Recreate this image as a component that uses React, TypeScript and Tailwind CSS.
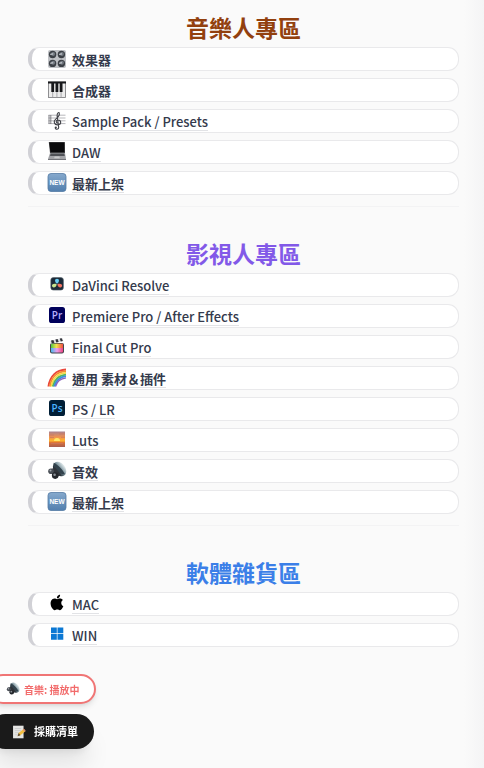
import React, { useState } from 'react';

interface LinkItem {
  label: string;
  icon: React.ReactNode;
}

interface Section {
  id: string;
  title: string;
  color: string;
  items: LinkItem[];
}

const iconClass = 'h-5 w-5 shrink-0';

const Knob = ({ x, y }: { x: number; y: number }) => (
  <g>
    <circle cx={x} cy={y} r="3.7" fill="#3c4046" />
    <circle cx={x + 0.5} cy={y - 0.6} r="2" fill="#747a82" />
    <path d={`M${x - 2.4} ${y - 0.2}L${x + 0.6} ${y - 0.6}`} stroke="#d9dde2" strokeWidth="1" />
  </g>
);

const KnobsIcon = () => (
  <svg viewBox="0 0 20 20" className={iconClass} aria-hidden="true">
    <rect x="1" y="1" width="18" height="18" rx="2" fill="#bfc1c5" />
    <Knob x={5.6} y={5.5} />
    <Knob x={14.4} y={5.5} />
    <Knob x={5.6} y={14.4} />
    <Knob x={14.4} y={14.4} />
  </svg>
);

const PianoIcon = () => (
  <svg viewBox="0 0 20 20" className={iconClass} aria-hidden="true">
    <rect x="1.5" y="2" width="17" height="15.5" fill="#ececec" stroke="#77777a" strokeWidth=".8" />
    <path d="M5.7 4v13M9.9 4v13M14.1 4v13" stroke="#8c8c90" strokeWidth=".7" />
    <path d="M1 1.500h18v2H1zM4.300 3.500h2.800v8.500H4.300zM8.500 3.500h2.800v8.500H8.500zM12.700 3.500h2.800v8.500h-2.800z" fill="#17181b" />
  </svg>
);

const ScoreIcon = () => (
  <svg viewBox="0 0 20 20" className={iconClass} fill="none" aria-hidden="true">
    <path d="M1.5 4.2h17M1.5 7h17M1.5 9.8h17M1.5 12.6h17" stroke="#a4a5a9" strokeWidth=".8" />
    <path d="M2 4v9M3.800 4v9" stroke="#64666c" strokeWidth=".8" />
    <path
      d="M10.600 12c-2-.4-1.800-3 .4-3 3.500 0 3.600 4.600.1 4.800C7.200 14.200 6 10.500 8.700 8.200c2-1.700 4.400-3.500 3.600-6-.4-1.500-2.200-.3-2.200 2.400l1.600 11.600c.2 2.500-3.400 2.500-3.400.8"
      stroke="#404248"
      strokeWidth="1.1"
      strokeLinecap="round"
    />
    <circle cx="8.800" cy="16.600" r="1.100" fill="#404248" />
  </svg>
);

const LaptopIcon = () => (
  <svg viewBox="0 0 20 20" className={iconClass} aria-hidden="true">
    <path d="M1.800 0h16l.2 11H3z" fill="#4b4b4e" />
    <path d="M2.300.4h15.200v9.900H3.400z" fill="#09090b" />
    <path d="M3 11h15l1 6H1z" fill="#a3a4a8" />
    <path d="M3.600 11.500h13.600l.6 2.500H3z" fill="#505257" />
    <path d="M7.600 14.600h4.800l.4 1.600H7.200z" fill="#c9cacc" />
    <path d="M1 17h18v1H1z" fill="#737479" />
  </svg>
);

const NewIcon = () => (
  <svg viewBox="0 0 20 20" className={iconClass} aria-hidden="true">
    <defs>
      <linearGradient id="newFill" x1="0" y1="0" x2="0" y2="1">
        <stop offset="0" stopColor="#86a9cd" />
        <stop offset="1" stopColor="#527fae" />
      </linearGradient>
    </defs>
    <rect x="1" y="0.500" width="18" height="18" rx="3" fill="url(#newFill)" stroke="#547ba5" strokeWidth=".8" />
    <text x="10" y="11.800" textAnchor="middle" fontSize="6.500" fontWeight="700" fill="#fff" fontFamily="Liberation Sans, sans-serif">NEW</text>
  </svg>
);

const ResolveIcon = () => (
  <svg viewBox="0 0 20 20" className={iconClass} aria-hidden="true">
    <rect x="3.800" y="2.500" width="12.600" height="12.600" rx="2.600" fill="#1c2a38" stroke="#56616b" strokeWidth=".6" />
    <path d="M10 8.700c-2.700-1.900-2.500-5 0-5s2.700 3.100 0 5z" fill="#6accf2" />
    <path d="M9.700 9.200c-.4 3.200-3.400 4.300-4.500 2.300s1.700-3.700 4.500-2.300z" fill="#c9e58f" />
    <path d="M10.400 9.200c2.800-1.400 5.600.3 4.500 2.300s-4.100.9-4.500-2.300z" fill="#f27362" />
  </svg>
);

const PremiereIcon = () => (
  <svg viewBox="0 0 20 20" className={iconClass} aria-hidden="true">
    <rect x="2" y="1" width="16" height="16" rx="2.600" fill="#00005b" />
    <text x="10" y="12.500" textAnchor="middle" fontSize="10" fontWeight="600" fill="#b9b1ff" fontFamily="Open Sans, sans-serif">Pr</text>
  </svg>
);

const PhotoshopIcon = () => (
  <svg viewBox="0 0 20 20" className={iconClass} aria-hidden="true">
    <rect x="2" y="1" width="16" height="16" rx="2.600" fill="#001e36" />
    <text x="10" y="12.500" textAnchor="middle" fontSize="10" fontWeight="600" fill="#4bb4ff" fontFamily="Open Sans, sans-serif">Ps</text>
  </svg>
);

const FinalCutIcon = () => (
  <svg viewBox="0 0 20 20" className={iconClass} aria-hidden="true">
    <defs>
      <linearGradient id="fcTop" x1="0" y1="0" x2="1" y2="0">
        <stop offset="0" stopColor="#50c747" />
        <stop offset=".45" stopColor="#f5e34b" />
        <stop offset="1" stopColor="#f04c43" />
      </linearGradient>
      <linearGradient id="fcBottom" x1="0" y1="0" x2="1" y2="0">
        <stop offset="0" stopColor="#48b8ee" />
        <stop offset=".5" stopColor="#eb9fea" />
        <stop offset="1" stopColor="#ec4381" />
      </linearGradient>
    </defs>
    <rect x="3" y="6" width="14" height="10.500" rx="2" fill="#45464c" />
    <path d="M4 6.700h12v4.300H4z" fill="url(#fcTop)" />
    <path d="M4 11h12v3.500q0 1-1 1H5q-1 0-1-1z" fill="url(#fcBottom)" />
    <path d="M3 3.700 15.500 1l.8 3L3.500 6.700z" fill="#e1e1e4" />
    <path d="m4 3.500 2.400-.5 1 2.800-2.600.6zM8.400 2.500l2.200-.5 1.100 2.900-2.400.5zM12.700 1.600l2-.4 1.200 2.800-2.100.4z" fill="#33343a" />
  </svg>
);

const RainbowIcon = () => (
  <svg viewBox="0 0 20 20" className={iconClass} fill="none" strokeWidth="1.800" aria-hidden="true">
    <path d="M1.400 18.500C2.800 8.500 9 2 19 1.500" stroke="#e9473b" />
    <path d="M2.900 18.500C4.200 9.500 10 3.700 19 3.200" stroke="#f58b32" />
    <path d="M4.400 18.500C5.600 10.700 11 5.400 19 4.900" stroke="#f7d843" />
    <path d="M5.800 18.500C7 11.900 12 7.100 19 6.600" stroke="#58b957" />
    <path d="M7.200 18.500C8.400 13.100 13 8.700 19 8.200" stroke="#3a8fe2" />
    <path d="M8.500 18.500c1.200-4.200 4.800-8 10.500-8.700" stroke="#8a63bd" strokeWidth="1.300" />
  </svg>
);

const SunsetIcon = () => (
  <svg viewBox="0 0 20 20" className={iconClass} aria-hidden="true">
    <defs>
      <linearGradient id="sunsetSky" x1="0" y1="0" x2="0" y2="1">
        <stop offset="0" stopColor="#a98290" />
        <stop offset=".35" stopColor="#ed9152" />
        <stop offset=".6" stopColor="#ffb62d" />
        <stop offset=".72" stopColor="#dc7135" />
        <stop offset="1" stopColor="#a65e52" />
      </linearGradient>
    </defs>
    <rect x="2" y="1.500" width="16" height="15.500" fill="url(#sunsetSky)" />
    <path d="M7 11a3 3 0 0 1 6 0z" fill="#ffe866" />
    <path d="M2 5h5M12 4h6M3 7.500h4M14 7.300h4M4 13.500h12" stroke="#c97763" strokeWidth=".7" />
  </svg>
);

const SpeakerIcon = ({ className = iconClass }: { className?: string }) => (
  <svg viewBox="0 0 20 20" className={className} aria-hidden="true">
    <defs>
      <linearGradient id="speakerCone" x1=".2" y1=".5" x2="1" y2=".5">
        <stop offset="0" stopColor="#27323a" />
        <stop offset=".45" stopColor="#7b929c" />
        <stop offset="1" stopColor="#e9f1f2" />
      </linearGradient>
    </defs>
    <ellipse cx="12.600" cy="8" rx="5.800" ry="8" transform="rotate(-38 12.600 8)" fill="url(#speakerCone)" />
    <path d="M6.500 1.700c4.500 2 9.200 6.600 11.500 11.600-5.600.1-11.200-4.300-11.500-11.600z" fill="#33434d" />
    <path d="m2 9 6-2.500 6 7-6 4z" fill="#30343a" />
    <circle cx="4" cy="10.300" r="2.800" fill="#4b5057" />
    <circle cx="8.200" cy="14.600" r="3.300" fill="#24272c" />
    <circle cx="7.600" cy="13.800" r="1.300" fill="#8b9198" />
    <circle cx="3.500" cy="9.600" r="1" fill="#a2a7ad" />
  </svg>
);

const AppleIcon = () => (
  <svg viewBox="0 0 24 24" className={iconClass} aria-hidden="true">
    <path
      transform="translate(2.600 .8) scale(.78)"
      d="M12.150 6.900c-.95 0-2.420-1.080-3.960-1.040-2.040.03-3.910 1.180-4.960 3.010-2.120 3.680-.55 9.100 1.520 12.090 1.010 1.450 2.210 3.090 3.790 3.040 1.520-.07 2.090-.99 3.940-.99 1.830 0 2.350.99 3.960.95 1.640-.03 2.680-1.480 3.680-2.950 1.160-1.690 1.640-3.320 1.660-3.410-.04-.01-3.180-1.220-3.220-4.850-.03-3.040 2.480-4.490 2.600-4.560-1.430-2.090-3.620-2.320-4.390-2.380-2-.16-3.680 1.090-4.610 1.090zM15.530 3.830c.84-1.010 1.400-2.430 1.240-3.830-1.200.05-2.660.81-3.530 1.820-.78.9-1.450 2.340-1.270 3.710 1.340.1 2.720-.69 3.560-1.700"
    />
  </svg>
);

const WindowsIcon = () => (
  <svg viewBox="0 0 20 20" className={iconClass} fill="#0b78d4" aria-hidden="true">
    <path d="M4 2.500h5.800v5.800H4zM10.500 2.500h5.800v5.800h-5.800zM4 9h5.800v5.800H4zM10.500 9h5.800v5.800h-5.800z" />
  </svg>
);

const MemoIcon = () => (
  <svg viewBox="0 0 20 20" className="size-3.5 shrink-0" aria-hidden="true">
    <path d="M1.500 1h15v18h-15z" fill="#e5e5e3" />
    <path d="M4 5h9M4 8h9M4 11h6M4 14h5" stroke="#c3c4c6" strokeWidth="1" />
    <path d="m8 16 1.500-4.500 7.500-6 2.500 3-7.500 6z" fill="#f1bd3e" />
    <path d="m8 16 1.500-4.500 2.500 3z" fill="#5c4a35" />
    <path d="m15.500 6.700 1.500-1.200 2.500 3L18 9.700z" fill="#d7837c" />
  </svg>
);

const sections: Section[] = [
  {
    id: 'music',
    title: '音樂人專區',
    color: 'text-[#92400e]',
    items: [
      { label: '效果器', icon: <KnobsIcon /> },
      { label: '合成器', icon: <PianoIcon /> },
      { label: 'Sample Pack / Presets', icon: <ScoreIcon /> },
      { label: 'DAW', icon: <LaptopIcon /> },
      { label: '最新上架', icon: <NewIcon /> }
    ]
  },
  {
    id: 'film',
    title: '影視人專區',
    color: 'text-[#8259e8]',
    items: [
      { label: 'DaVinci Resolve', icon: <ResolveIcon /> },
      { label: 'Premiere Pro / After Effects', icon: <PremiereIcon /> },
      { label: 'Final Cut Pro', icon: <FinalCutIcon /> },
      { label: '通用 素材＆插件', icon: <RainbowIcon /> },
      { label: 'PS / LR', icon: <PhotoshopIcon /> },
      { label: 'Luts', icon: <SunsetIcon /> },
      { label: '音效', icon: <SpeakerIcon /> },
      { label: '最新上架', icon: <NewIcon /> }
    ]
  },
  {
    id: 'software',
    title: '軟體雜貨區',
    color: 'text-[#3b7fe8]',
    items: [
      { label: 'MAC', icon: <AppleIcon /> },
      { label: 'WIN', icon: <WindowsIcon /> }
    ]
  }
];

// Latin labels get heavy fast, so they stay one step lighter than the Chinese ones
const labelWeight = (label: string) => (/^[A-Za-z]/.test(label) ? 'font-medium' : 'font-bold');

export default function App() {
  const [playing, setPlaying] = useState(true);

  return (
    <div className="min-h-screen bg-[linear-gradient(to_left,#f4f4f5,#fafafa_20px)] pt-[9px] pr-[25px] pl-7 font-['Noto_Sans_CJK_TC',sans-serif] text-[#343a4c]">
      <main>
        {sections.map((section) => (
          <section key={section.id} className="mb-7 border-b border-[#f3f3f4] pb-[11px] last:mb-0 last:border-0">
            <h2 className={`pb-0.5 text-center text-[23px] leading-9 font-bold ${section.color}`}>{section.title}</h2>
            <ul className="flex flex-col gap-[7px]">
              {section.items.map((item) => (
                <li
                  key={item.label}
                  className="flex h-6 items-center rounded-[11px] border border-l-4 border-[#e9e9eb] border-l-[#d1d1d6] bg-white pl-[15px]"
                >
                  <a href={`#${section.id}`} className={`flex items-center gap-[5px] text-[13px] leading-4 ${labelWeight(item.label)}`}>
                    {item.icon}
                    <span className="border-b border-[#e2e3e6] pt-[3px]">{item.label}</span>
                  </a>
                </li>
              ))}
            </ul>
          </section>
        ))}
      </main>

      <div className="fixed bottom-[19px] -left-3 flex flex-col items-start gap-2.5">
        <button
          onClick={() => setPlaying(!playing)}
          className="flex h-[30px] items-center gap-1 rounded-full border-2 border-[#f07575] bg-white pr-3.5 pl-4 text-[10px] font-bold text-[#f26b6b] shadow-md"
        >
          <SpeakerIcon className="size-3.5 shrink-0" />
          {playing ? '音樂: 播放中' : '音樂: 已暫停'}
        </button>
        <button className="flex h-[35px] items-center gap-2 rounded-full bg-[#1a1a1a] pr-4 pl-6 text-[11px] font-bold text-white shadow-xl">
          <MemoIcon />
          採購清單
        </button>
      </div>
    </div>
  );
}
